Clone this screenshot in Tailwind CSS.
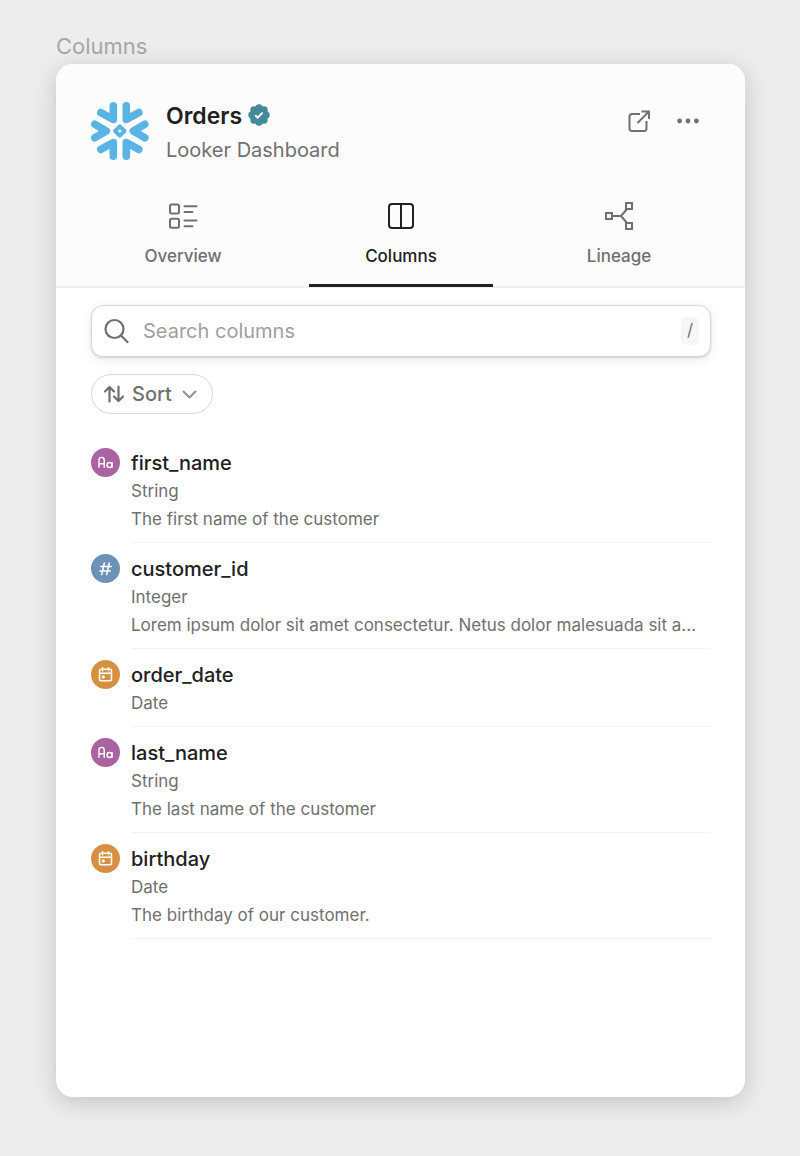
<!DOCTYPE html>
<html lang="en">
<head>
<meta charset="utf-8">
<meta name="viewport" content="width=device-width, initial-scale=1">
<title>Columns</title>
<script src="https://cdn.jsdelivr.net/npm/@tailwindcss/browser@4"></script>
</head>
<body class="flex min-h-screen flex-col bg-[#ededed] pt-[30px] pr-[55px] pb-[59px] pl-14 font-['Inter',sans-serif] text-[#707070]">
<svg class="hidden" aria-hidden="true">
  <symbol id="type-string" viewBox="0 0 29 29">
    <circle cx="14.5" cy="14.5" r="14.5" fill="#aa62a0"/>
    <path d="M8 19.800v-7.800a2.600 2.600 0 0 1 5.200 0v7.800M8 15.700h5.200M21.100 14.200v5.600" fill="none" stroke="#fff" stroke-width="1.400"/>
    <circle cx="18.500" cy="17" r="2.500" fill="none" stroke="#fff" stroke-width="1.400"/>
  </symbol>
  <symbol id="type-integer" viewBox="0 0 29 29">
    <circle cx="14.500" cy="14.500" r="14.500" fill="#6c93b5"/>
    <path d="M13.300 9L10.800 20.500M18.200 9L15.700 20.500M9.700 12.600h10.500M8.900 16.900h10.500" fill="none" stroke="#fff" stroke-width="1.500" stroke-linecap="round"/>
  </symbol>
  <symbol id="type-date" viewBox="0 0 29 29">
    <circle cx="14.500" cy="14.500" r="14.500" fill="#d69044"/>
    <path d="M10 9.300h9a1.500 1.500 0 0 1 1.500 1.500v8.400a1.500 1.500 0 0 1-1.500 1.500h-9a1.500 1.500 0 0 1-1.500-1.500v-8.400a1.500 1.500 0 0 1 1.500-1.500zM8.500 13.300h12M11.500 7.700v3M17.500 7.700v3" fill="none" stroke="#fff" stroke-width="1.500" stroke-linecap="round"/>
    <circle cx="12.300" cy="16.900" r="1.600" fill="#fff"/>
  </symbol>
</svg>

<h1 class="pb-0.5 text-[22px] leading-8 font-normal text-[#a7a7a7]">Columns</h1>

<main class="flex-1 overflow-hidden rounded-[17px] bg-white shadow-[0_5px_24px_rgba(0,0,0,0.18)]">
  <header class="border-b-2 border-[#efefef] bg-[#fcfcfc] pr-[34px] pl-[35px] pt-9">
    <div class="flex items-start">
      <svg class="mt-0.5 size-[58px] shrink-0" viewBox="0 0 58 58" fill="none" stroke="#59b4e5" stroke-width="7.600" stroke-linecap="round" stroke-linejoin="round" role="img" aria-label="Snowflake">
        <path d="M22.300 3.800V17.500L9.800 10.600M35.300 3.800V17.500L47.800 10.600M22.300 54.200V40.500L9.800 47.400M35.300 54.200V40.500L47.800 47.400M3.800 22.200L15.300 29L3.800 35.800M53.800 22.200L42.300 29L53.800 35.800"/>
        <path d="M28.800 24.300L33.500 29L28.800 33.700L24.100 29Z" stroke-width="4"/>
      </svg>
      <div class="ml-[17px] flex-1">
        <div class="flex h-8 items-center gap-1.5">
          <h2 class="text-[23px] leading-8 font-semibold text-[#212121]">Orders</h2>
          <svg class="mb-0.5 size-[22px]" viewBox="0 0 22 22" fill="none" role="img" aria-label="Verified">
            <g fill="#44899a">
              <circle cx="11" cy="11" r="9"/>
              <circle cx="11" cy="4" r="3.700"/><circle cx="16" cy="6" r="3.700"/><circle cx="18" cy="11" r="3.700"/><circle cx="16" cy="16" r="3.700"/>
              <circle cx="11" cy="18" r="3.700"/><circle cx="6" cy="16" r="3.700"/><circle cx="4" cy="11" r="3.700"/><circle cx="6" cy="6" r="3.700"/>
            </g>
            <path d="M7.200 11.200l2.500 2.400 4.900-4.900" stroke="#fff" stroke-width="1.900"/>
          </svg>
        </div>
        <p class="mt-1 text-[20px] leading-7">Looker Dashboard</p>
      </div>
      <button type="button" aria-label="Open in new window" class="mt-2 flex size-[26px] items-center justify-center">
        <svg class="size-[26px]" viewBox="0 0 26 26" fill="none" stroke="#707070" stroke-width="2">
          <path d="M14 6H6a2.500 2.500 0 0 0-2.500 2.500V20.500a2.500 2.500 0 0 0 2.500 2.500H18a2.500 2.500 0 0 0 2.500-2.500V13"/>
          <path d="M11.500 15L22.500 4M15.500 3.500H23V11"/>
        </svg>
      </button>
      <button type="button" aria-label="More options" class="mt-2 mr-[10px] ml-[23px] flex size-[26px] items-center justify-center">
        <svg class="size-[26px]" viewBox="0 0 26 26" fill="#707070"><circle cx="4.600" cy="13" r="2.400"/><circle cx="13" cy="13" r="2.400"/><circle cx="21.400" cy="13" r="2.400"/></svg>
      </button>
    </div>

    <nav class="mt-9 -mb-px grid grid-cols-3 gap-[34px] text-[17px] leading-6 font-medium">
      <a href="#overview" class="flex flex-col items-center border-b-3 border-transparent pb-4">
        <svg class="mb-3 size-8" viewBox="0 0 32 32" fill="none" stroke="#707070" stroke-width="2">
          <rect x="3" y="4.500" width="9" height="9" rx="1.500"/><rect x="3" y="18.800" width="9" height="9" rx="1.500"/>
          <path d="M17.500 6.300h12M17.500 12h8M17.500 20.600h12M17.500 26.300h8" stroke-linecap="round"/>
        </svg>
        Overview
      </a>
      <a href="#columns" aria-current="page" class="flex flex-col items-center border-b-3 border-[#212121] pb-4 text-[#212121]">
        <svg class="mb-3 size-8" viewBox="0 0 32 32" fill="none" stroke="#212121" stroke-width="2">
          <rect x="4" y="4" width="24" height="24" rx="3"/><path d="M16 4v24"/>
        </svg>
        Columns
      </a>
      <a href="#lineage" class="flex flex-col items-center border-b-3 border-transparent pb-4">
        <svg class="mb-3 size-8" viewBox="0 0 32 32" fill="none" stroke="#707070" stroke-width="2">
          <rect x="3" y="13" width="6" height="6"/><rect x="23" y="3" width="6" height="6"/><rect x="23" y="23" width="6" height="6"/>
          <path d="M9 16h9M24 9L18 16l6 7"/>
        </svg>
        Lineage
      </a>
    </nav>
  </header>

  <div class="pr-[34px] pl-[35px] pt-[17px]">
    <div class="flex h-[52px] items-center rounded-xl border border-[#d6d6d6] bg-white px-[11px] shadow-[0_3px_12px_rgba(0,0,0,0.08),0_1px_2px_rgba(0,0,0,0.14)]">
      <svg class="size-[26px] shrink-0" viewBox="0 0 26 26" fill="none" stroke="#707070" stroke-width="2.200" stroke-linecap="round" aria-hidden="true"><circle cx="11.500" cy="11" r="9"/><path d="M18 17.500L24.500 24"/></svg>
      <input type="search" aria-label="Search columns" placeholder="Search columns" class="ml-[14px] min-w-0 flex-1 bg-transparent text-[20px] leading-7 outline-none placeholder:text-[#a0a0a0]">
      <kbd class="flex h-7 w-[18px] items-center justify-center rounded-[5px] bg-[#f6f6f6] font-['Inter',sans-serif] text-[17px]">/</kbd>
    </div>

    <button type="button" class="mt-[17px] flex h-10 items-center rounded-full border border-[#d6d6d6] pr-[15px] pl-[11px] text-[20px] leading-7 font-medium">
      <svg class="size-[22px]" viewBox="0 0 22 22" fill="none" stroke="#707070" stroke-width="2.200" stroke-linecap="round" stroke-linejoin="round" aria-hidden="true"><path d="M6.500 18.500V4M2 8.500l4.500-4.500L11 8.500M15.500 3.500V18M11 13.500l4.500 4.500L20 13.500"/></svg>
      <span class="mr-[10px] ml-[7px]">Sort</span>
      <svg class="h-[9px] w-[15px]" viewBox="0 0 15 9" fill="none" stroke="#909090" stroke-width="2" stroke-linecap="round" stroke-linejoin="round" aria-hidden="true"><path d="M1.500 1.500l6 6 6-6"/></svg>
    </button>

    <ul class="mt-[23px]">
      <li class="flex gap-[11px]">
        <svg class="mt-[11px] size-[29px] shrink-0"><use href="#type-string"/></svg>
        <div class="min-w-0 flex-1 border-b border-[#f2f2f2] pt-3 pb-[9px] text-[17px] leading-7">
          <h3 class="text-[20px] leading-7 font-medium text-[#212121]">first_name</h3>
          <p>String</p>
          <p class="truncate">The first name of the customer</p>
        </div>
      </li>
      <li class="flex gap-[11px]">
        <svg class="mt-[11px] size-[29px] shrink-0"><use href="#type-integer"/></svg>
        <div class="min-w-0 flex-1 border-b border-[#f2f2f2] pt-3 pb-[9px] text-[17px] leading-7">
          <h3 class="text-[20px] leading-7 font-medium text-[#212121]">customer_id</h3>
          <p>Integer</p>
          <p class="truncate">Lorem ipsum dolor sit amet consectetur. Netus dolor malesuada sit a...</p>
        </div>
      </li>
      <li class="flex gap-[11px]">
        <svg class="mt-[11px] size-[29px] shrink-0"><use href="#type-date"/></svg>
        <div class="min-w-0 flex-1 border-b border-[#f2f2f2] pt-3 pb-[9px] text-[17px] leading-7">
          <h3 class="text-[20px] leading-7 font-medium text-[#212121]">order_date</h3>
          <p>Date</p>
        </div>
      </li>
      <li class="flex gap-[11px]">
        <svg class="mt-[11px] size-[29px] shrink-0"><use href="#type-string"/></svg>
        <div class="min-w-0 flex-1 border-b border-[#f2f2f2] pt-3 pb-[9px] text-[17px] leading-7">
          <h3 class="text-[20px] leading-7 font-medium text-[#212121]">last_name</h3>
          <p>String</p>
          <p class="truncate">The last name of the customer</p>
        </div>
      </li>
      <li class="flex gap-[11px]">
        <svg class="mt-[11px] size-[29px] shrink-0"><use href="#type-date"/></svg>
        <div class="min-w-0 flex-1 border-b border-[#f2f2f2] pt-3 pb-[9px] text-[17px] leading-7">
          <h3 class="text-[20px] leading-7 font-medium text-[#212121]">birthday</h3>
          <p>Date</p>
          <p class="truncate">The birthday of our customer.</p>
        </div>
      </li>
    </ul>
  </div>
</main>
</body>
</html>
